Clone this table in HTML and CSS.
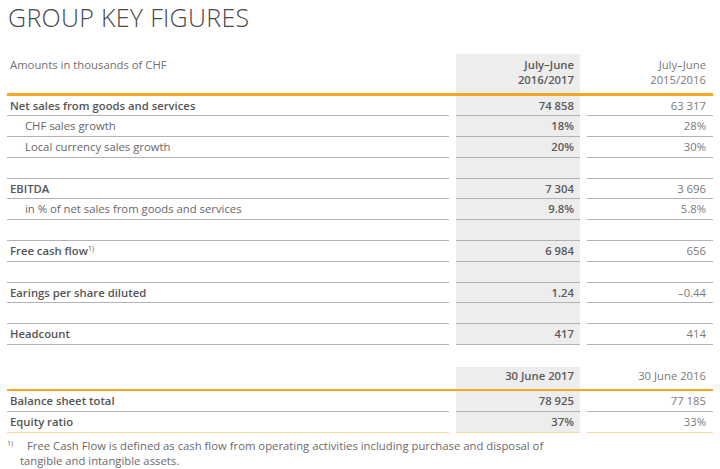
FILE: index.html
```html
<!DOCTYPE html>
<html>
<head>
<meta charset="utf-8">
<link rel="stylesheet" href="styles.css">
</head>
<body>
<div class="page">
  <h1 class="title">GROUP KEY FIGURES</h1>

  <div class="block block-main">
    <div class="row head">
      <div class="cell label">Amounts in thousands of CHF</div>
      <div class="cell cur">July–June<br>2016/2017</div>
      <div class="cell prev">July–June<br>2015/2016</div>
    </div>
    <div class="rule"></div>
    <div class="row strong">
      <div class="cell label">Net sales from goods and services</div>
      <div class="cell cur">74 858</div>
      <div class="cell prev">63 317</div>
    </div>
    <div class="row">
      <div class="cell label indent">CHF sales growth</div>
      <div class="cell cur">18%</div>
      <div class="cell prev">28%</div>
    </div>
    <div class="row">
      <div class="cell label indent">Local currency sales growth</div>
      <div class="cell cur">20%</div>
      <div class="cell prev">30%</div>
    </div>
    <div class="row">
      <div class="cell label"></div>
      <div class="cell cur"></div>
      <div class="cell prev"></div>
    </div>
    <div class="row strong">
      <div class="cell label">EBITDA</div>
      <div class="cell cur">7 304</div>
      <div class="cell prev">3 696</div>
    </div>
    <div class="row">
      <div class="cell label indent">in % of net sales from goods and services</div>
      <div class="cell cur">9.8%</div>
      <div class="cell prev">5.8%</div>
    </div>
    <div class="row">
      <div class="cell label"></div>
      <div class="cell cur"></div>
      <div class="cell prev"></div>
    </div>
    <div class="row strong">
      <div class="cell label">Free cash flow<sup class="fn">1)</sup></div>
      <div class="cell cur">6 984</div>
      <div class="cell prev">656</div>
    </div>
    <div class="row">
      <div class="cell label"></div>
      <div class="cell cur"></div>
      <div class="cell prev"></div>
    </div>
    <div class="row strong">
      <div class="cell label">Earings per share diluted</div>
      <div class="cell cur">1.24</div>
      <div class="cell prev">–0.44</div>
    </div>
    <div class="row">
      <div class="cell label"></div>
      <div class="cell cur"></div>
      <div class="cell prev"></div>
    </div>
    <div class="row strong">
      <div class="cell label">Headcount</div>
      <div class="cell cur">417</div>
      <div class="cell prev">414</div>
    </div>
  </div>

  <div class="block block-balance">
    <div class="row head head-single">
      <div class="cell label"></div>
      <div class="cell cur">30 June 2017</div>
      <div class="cell prev">30 June 2016</div>
    </div>
    <div class="rule"></div>
    <div class="row strong">
      <div class="cell label">Balance sheet total</div>
      <div class="cell cur">78 925</div>
      <div class="cell prev">77 185</div>
    </div>
    <div class="row strong last">
      <div class="cell label">Equity ratio</div>
      <div class="cell cur">37%</div>
      <div class="cell prev">33%</div>
    </div>
  </div>

  <div class="footnote">
    <div class="fn-line"><sup class="fn fn-lead">1)</sup>Free Cash Flow is defined as cash flow from operating activities including purchase and disposal of</div>
    <div class="fn-line fn-cont">tangible and intangible assets.</div>
  </div>
</div>
</body>
</html>
```

FILE: styles.css
```css
html, body {
  margin: 0;
  padding: 0;
  background: #ffffff;
}

body {
  font-family: "Open Sans", "Liberation Sans", sans-serif;
  font-size: 11.3px;
  color: #666666;
}

.page {
  width: 706px;
  padding: 0 0 0 7px;
}

.title {
  margin: 0;
  padding: 1px 0 0 1px;
  height: 39px;
  font-family: "Open Sans", sans-serif;
  font-weight: 300;
  font-size: 25px;
  line-height: 32px;
  letter-spacing: 0.3px;
  color: #484848;
}

.block-main {
  margin-top: 14px;
}

.block-balance {
  margin-top: 22px;
}

.row {
  display: grid;
  grid-template-columns: 442px 124px 126px;
  column-gap: 7px;
}

.cell {
  height: 19.8px;
  line-height: 19.8px;
  border-bottom: 1px solid #b2b2b2;
  white-space: nowrap;
}

.label {
  padding-left: 3px;
}

.label.indent {
  padding-left: 18px;
}

.cur {
  background: #ededed;
  text-align: right;
  padding-right: 6px;
  font-weight: 600;
  color: #5a5a5a;
}

.prev {
  text-align: right;
  padding-right: 7px;
  color: #7a7a7a;
}

.strong .label {
  font-weight: 600;
  color: #555555;
}

.head .cell {
  border-bottom: none;
  height: 39px;
  line-height: 15px;
  padding-top: 3px;
  box-sizing: border-box;
}

.head .label {
  color: #707070;
}

.head-single .cell {
  height: 21.5px;
  line-height: 17px;
  padding-top: 0;
}

.rule {
  height: 2.5px;
  background: #f6a623;
}

.last .cell {
  border-bottom-color: #f4dc9c;
}

.fn {
  font-size: 7px;
  line-height: 0;
  vertical-align: 4px;
  font-weight: 400;
}

.fn-lead {
  display: inline-block;
  width: 20px;
}

.footnote {
  margin-top: 5px;
  line-height: 15px;
  color: #6a6a6a;
}

.fn-line {
  white-space: nowrap;
}

.fn-cont {
  padding-left: 13px;
}
```
